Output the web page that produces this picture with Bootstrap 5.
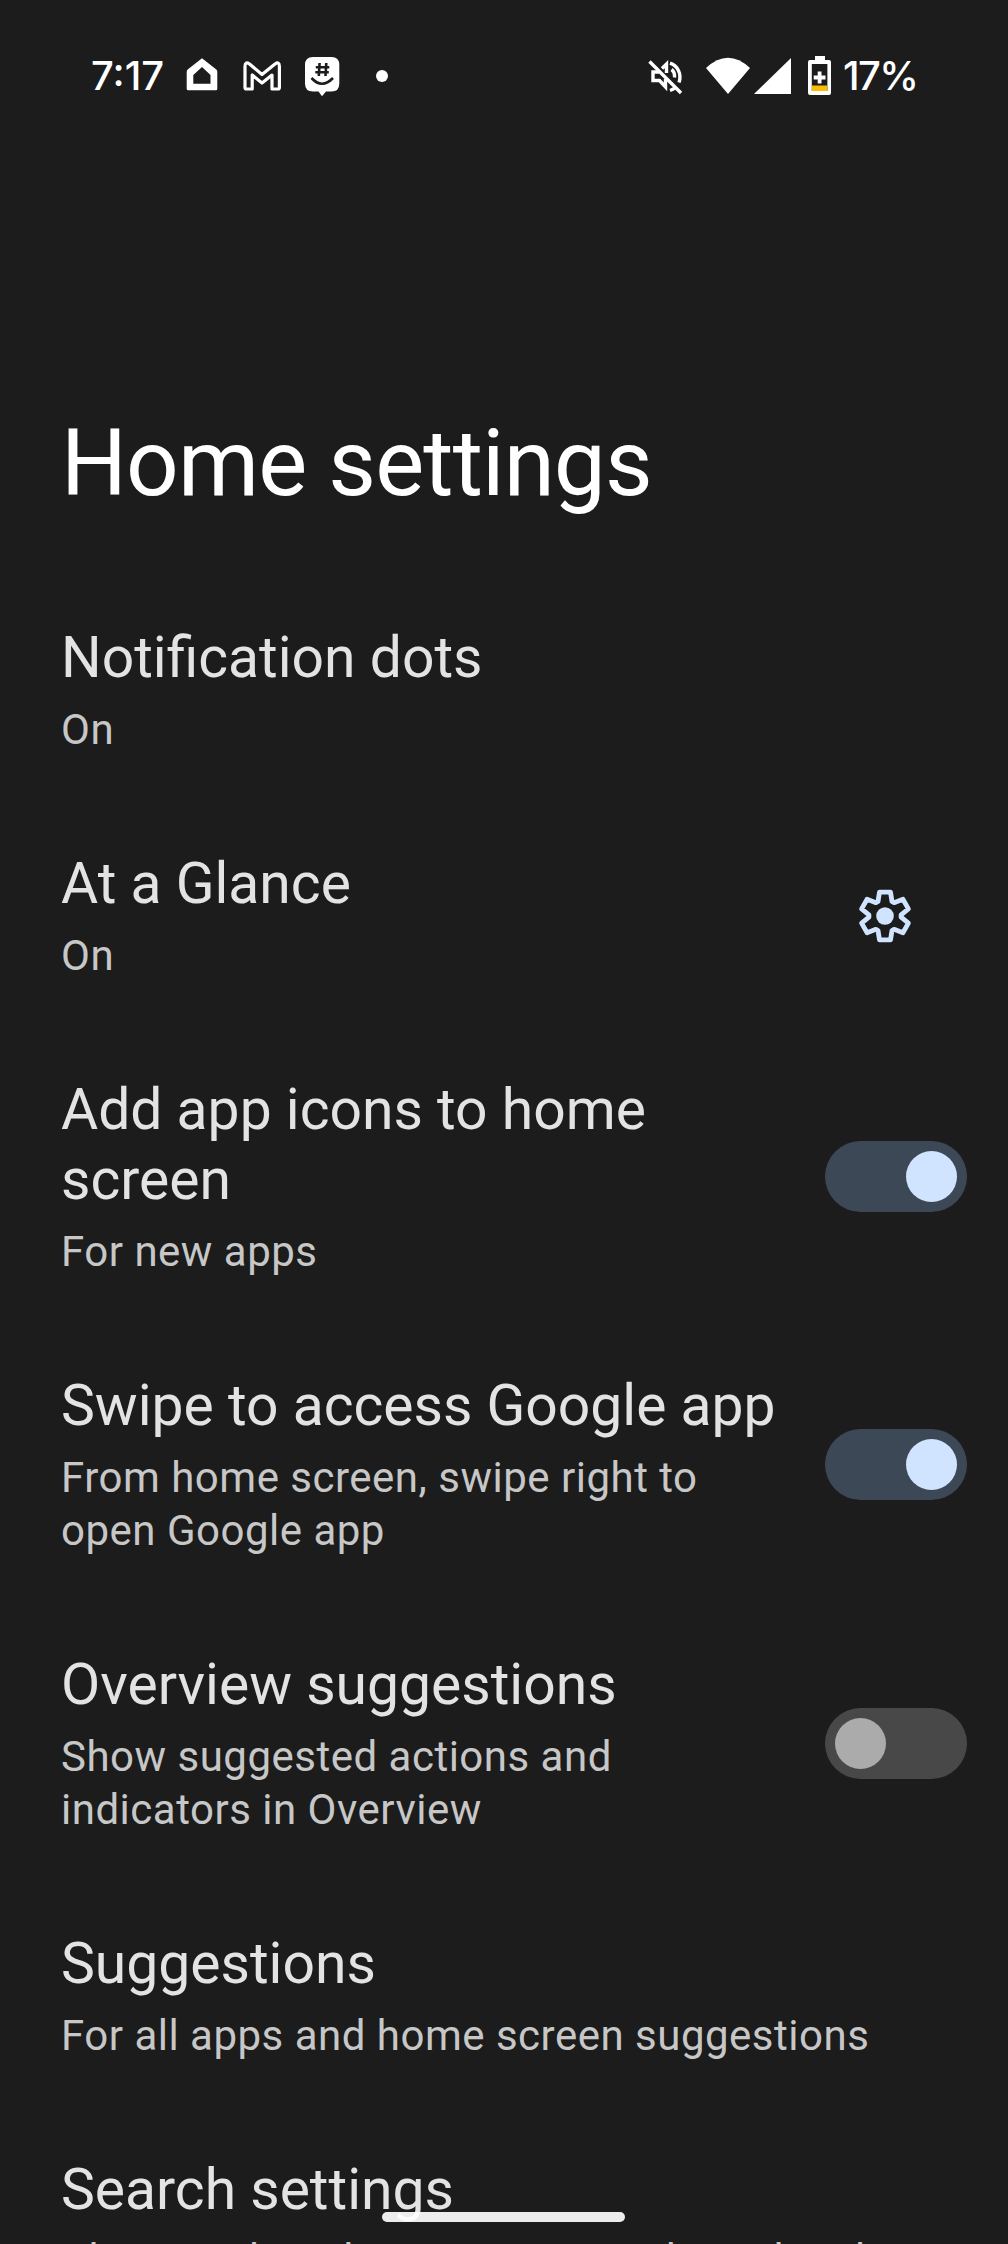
<!DOCTYPE html>
<html lang="en" data-bs-theme="dark">
<head>
<meta charset="utf-8">
<meta name="viewport" content="width=device-width, initial-scale=1">
<title>Home settings</title>
<link href="https://cdn.jsdelivr.net/npm/bootstrap@5.3.0/dist/css/bootstrap.min.css" rel="stylesheet">
<style>
html,body{background:#1c1c1c}
.screen{width:1008px;height:2244px;overflow:hidden;background:#1c1c1c;color:#e3e3e3;font-family:Roboto,"Liberation Sans",sans-serif}
.statusbar{height:152px;padding:50px 91px 0 91px;color:#fff;font:500 40px/52px Inter,sans-serif}
.statusbar svg{display:block;flex:none}
.clock{width:95px;letter-spacing:0}
.percent{letter-spacing:-1.6px;width:74px;white-space:nowrap;margin-left:10px}
.page-title{margin:258px 0 58px;padding-left:61px;font-size:92.5px;line-height:108px;font-weight:400;letter-spacing:-.9px;color:#fff}
.pref{padding:47px 41px 46px 61px}
.pref h2{font-size:57px;line-height:70px;font-weight:400;letter-spacing:0;margin:0;white-space:nowrap;color:#e3e3e3}
.pref p{font-size:42px;line-height:53px;letter-spacing:.5px;margin:10px 0 0;color:#c7c7c7;white-space:nowrap}
.pref:last-child p{margin-top:8px}
.toggle{width:142px;height:71px;border-radius:36px;padding:0 10px;background:#484848}
.toggle span{width:51px;height:51px;border-radius:50%;background:#ababab}
.toggle.is-on{background:#3d4857;justify-content:flex-end}
.toggle.is-on span{background:#d0e4ff}
.gear{margin-right:53px}
.handle{left:382px;top:2212px;width:243px;height:10px;border-radius:5px;background:rgba(255,255,255,.92)}
</style>
</head>
<body>
<div class="screen position-relative">
  <header class="statusbar d-flex justify-content-between align-items-start">
    <div class="d-flex">
      <span class="clock">7:17</span>
      <svg width="205" height="50" viewBox="186 50 205 50" fill="#fff">
        <path fill-rule="evenodd" d="M202 58.3 216.3 69.6Q217.3 70.5 217.3 72V88.8Q217.3 90.3 215.8 90.3H188.2Q186.7 90.3 186.7 88.8V72Q186.7 70.5 187.7 69.6ZM202 67 193.3 75V83.7H210.5V75Z"/>
        <path fill="none" stroke="#fff" stroke-width="3.2" stroke-linejoin="round" d="M245 87.5V66.5Q245 61 249.5 64L262 74.5 275 64Q279.4 61 279.4 66.5V87.5Q279.4 89 278 89H272V75L262 83 252.2 75V89H246.4Q245 89 245 87.5Z"/>
        <path d="M313 57H331.5Q339.3 57 339.3 65V83.5Q339.3 91.5 331.5 91.5H326L322 96.3 318.500 91.500H313Q305 91.500 305 83.500V65Q305 57 313 57Z"/>
        <path fill="none" stroke="#1c1c1c" stroke-width="2.600" d="M319.600 63 318.800 76M326.300 63 325.500 76M315.800 67.200H329.300M315.300 72.300H328.800"/>
        <path fill="none" stroke="#1c1c1c" stroke-width="2.600" d="M311.500 78Q322 89.500 333 78"/>
        <circle cx="382" cy="76" r="6"/>
      </svg>
    </div>
    <div class="d-flex">
      <svg width="186" height="50" viewBox="649 50 186 50" fill="#fff">
        <g fill="none" stroke="#fff" stroke-width="3.4">
          <path d="M651.500 61.500 683 93" stroke-width="3.400"/>
          <path d="M661 72H655V80.500H661.500L667.500 87V79"/>
          <path d="M664 68.500 668.500 64V73"/>
          <path d="M672 63.200C679.500 65.500 684 74 681 82.500M677.500 87.500Q675 89.500 672 90.500M673.500 69.500Q677 72 676.500 77.500"/>
        </g>
        <path d="M708 68Q730 47.500 752 68L730 94Z"/>
        <path d="M793 58V94H756Z"/>
        <path fill-rule="evenodd" d="M817 56H827V60H831Q833 60 833 62V93Q833 95 831 95H812Q810 95 810 93V62Q810 60 812 60H817ZM813.800 64V91H829.400V64Z"/>
        <path fill="#fbbc04" d="M813.800 85.500H829.400V91H813.800Z"/>
        <path d="M819.700 71.500H823.500V75.600H827.500V79.400H823.500V83.500H819.700V79.400H815.700V75.600H819.700Z"/>
      </svg>
      <span class="percent">17%</span>
    </div>
  </header>

  <h1 class="page-title">Home settings</h1>

  <main>
    <section class="pref"><h2>Notification dots</h2><p>On</p></section>

    <section class="pref d-flex justify-content-between align-items-center">
      <div><h2>At a Glance</h2><p>On</p></div>
      <svg class="gear" width="58" height="58" viewBox="-29 -29 58 58" role="img" aria-label="Settings">
        <path fill="none" stroke="#d0e4ff" stroke-width="4.800" stroke-linejoin="round" d="M-5.500-23.800H5.500L7-14.500 9.100-13.300 17.900-16.700 23.400-7.100 16.100-1.200V1.200L23.400 7.100 17.900 16.700 9.100 13.300 7 14.500 5.500 23.800H-5.500L-7 14.500-9.100 13.300-17.900 16.700-23.400 7.100-16.100 1.200V-1.200L-23.400-7.100-17.900-16.700-9.100-13.300-7-14.500Z"/>
        <circle r="8.800" fill="#d0e4ff"/>
      </svg>
    </section>

    <section class="pref d-flex justify-content-between align-items-center">
      <div><h2>Add app icons to home<br>screen</h2><p>For new apps</p></div>
      <div class="toggle is-on d-flex align-items-center" role="switch" aria-checked="true"><span></span></div>
    </section>

    <section class="pref d-flex justify-content-between align-items-center">
      <div><h2>Swipe to access Google app</h2><p>From home screen, swipe right to<br>open Google app</p></div>
      <div class="toggle is-on d-flex align-items-center" role="switch" aria-checked="true"><span></span></div>
    </section>

    <section class="pref d-flex justify-content-between align-items-center">
      <div><h2>Overview suggestions</h2><p>Show suggested actions and<br>indicators in Overview</p></div>
      <div class="toggle d-flex align-items-center" role="switch" aria-checked="false"><span></span></div>
    </section>

    <section class="pref"><h2>Suggestions</h2><p>For all apps and home screen suggestions</p></section>

    <section class="pref"><h2>Search settings</h2><p>Choose what shows up in search on the phone</p></section>
  </main>
  <div class="handle position-absolute"></div>
</div>
<script src="https://cdn.jsdelivr.net/npm/bootstrap@5.3.0/dist/js/bootstrap.bundle.min.js"></script>
</body>
</html>
